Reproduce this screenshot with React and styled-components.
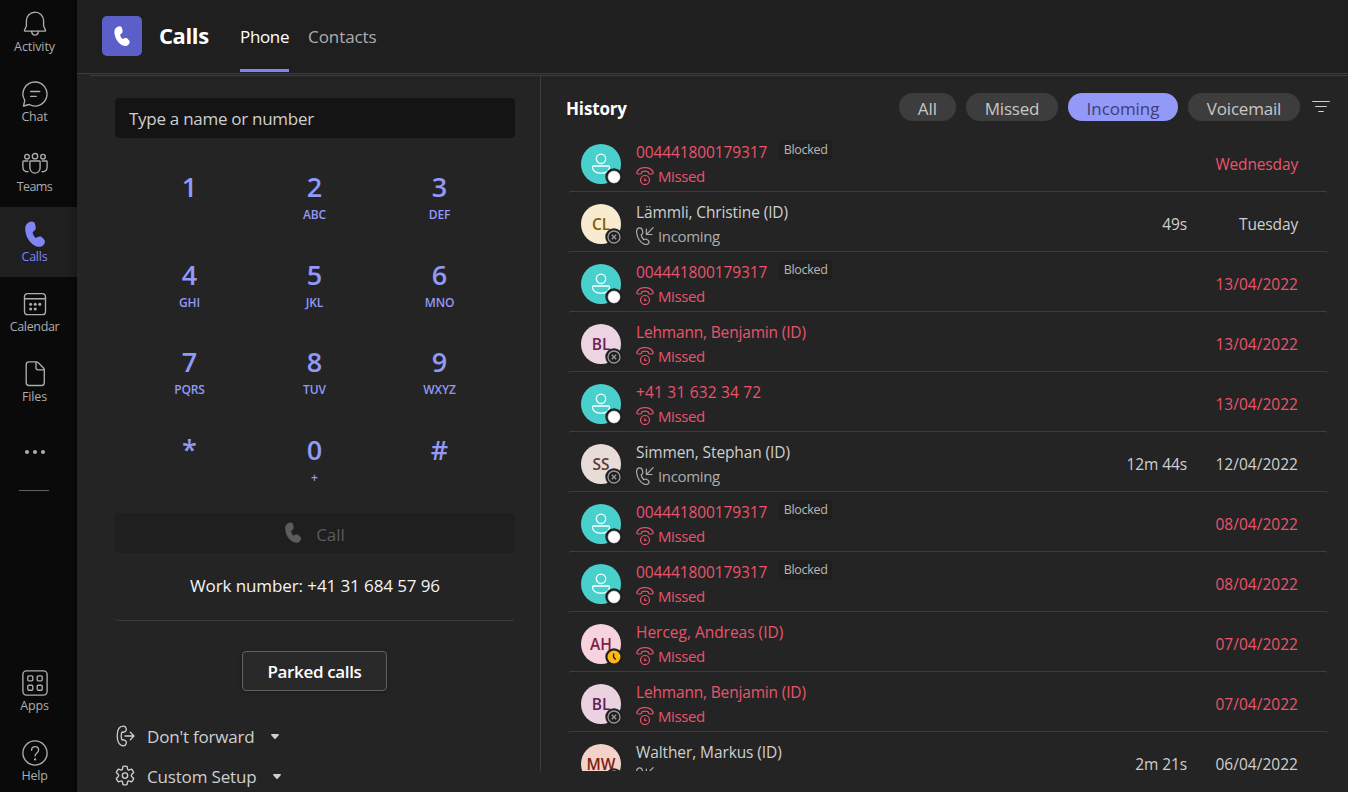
import React from "react";
import styled, { createGlobalStyle } from "styled-components";

const Global = createGlobalStyle`
  * { box-sizing: border-box; }
  body {
    margin: 0;
    background: #242424;
    font-family: "Open Sans", "Noto Sans", sans-serif;
    overflow: hidden;
  }
  button { font: inherit; color: inherit; border: 0; background: none; padding: 0; margin: 0; }
  svg { display: block; flex: none; }
`;

const Shell = styled.div`
  display: flex;
  width: 1348px;
  height: 792px;
  overflow: hidden;
  background: #242424;
`;

/* Text run with optional tracking */
const Label = styled.span`
  letter-spacing: ${(p) => p.$track || 0}px;
  white-space: nowrap;
`;

/* ---------- App rail ---------- */
const Rail = styled.nav`
  display: flex;
  flex-direction: column;
  flex: none;
  width: 77px;
  height: 799px;
  margin-top: -3px;
  background: #0a0a0a;
  box-shadow: inset -8px 0 8px -6px rgba(0, 0, 0, 0.4);
`;

const RailItem = styled.button`
  display: flex;
  flex-direction: column;
  align-items: center;
  flex: none;
  height: 70px;
  padding: 14px 8px 0 0;
  color: ${(p) => (p.$active ? "#7f85f5" : "#adadad")};
  background: ${(p) => (p.$active ? "linear-gradient(90deg, #1f1f1f 66px, #191919 77px)" : "transparent")};
  font-size: 12.5px;
  line-height: 18px;
  svg { margin-bottom: 1px; }
`;

const RailDots = styled.div`
  display: flex;
  justify-content: center;
  gap: 4px;
  padding: 33px 7px 0 0;
  height: 73px;
  i { width: 4px; height: 4px; border-radius: 50%; background: #adadad; }
`;

const RailRule = styled.div`
  width: 30px;
  height: 1px;
  margin-left: 19px;
  background: #616161;
`;

const RailSpacer = styled.div`
  flex: 1;
`;

/* ---------- Header ---------- */
const Main = styled.main`
  display: flex;
  flex-direction: column;
  flex: 1;
  min-width: 0;
`;

const Header = styled.header`
  display: flex;
  align-items: center;
  height: 74px;
  flex: none;
  padding-left: 25px;
  background: #1f1f1f;
  border-bottom: 1px solid #3d3d3d;
`;

const AppTile = styled.div`
  display: flex;
  align-items: center;
  justify-content: center;
  width: 40px;
  height: 40px;
  margin-bottom: 1px;
  border-radius: 5px;
  background: #5b5fc7;
  color: #fff;
`;

const Title = styled.h1`
  width: 50px;
  margin: 0 31px 4px 17px;
  font-size: 22px;
  line-height: 30px;
  font-weight: 700;
  color: #fff;
`;

const Tab = styled.button`
  display: flex;
  align-items: center;
  height: 73px;
  margin-right: 19px;
  padding-bottom: 1px;
  font-size: 17px;
  color: ${(p) => (p.$active ? "#fff" : "#adadad")};
  background: ${(p) => (p.$active ? "linear-gradient(#7f85f5, #7f85f5) 0 69px / 100% 3px no-repeat" : "none")};
`;

const Body = styled.div`
  display: flex;
  flex: 1;
  min-height: 0;
  margin: 1px 0 0 13px;
  border-top: 1px solid #3d3d3d;
`;

/* ---------- Dial pad ---------- */
const Dialer = styled.section`
  width: 450px;
  flex: none;
  padding: 22px 25px 0;
`;

const Search = styled.div`
  height: 40px;
  padding: 0 14px;
  border-radius: 4px;
  background: #141414;
  color: #cfcfcf;
  font-size: 17px;
  line-height: 41px;
`;

const Keys = styled.div`
  display: grid;
  grid-template-columns: repeat(3, 125px);
  grid-auto-rows: 87.6px;
  justify-content: center;
  margin-top: 31px;
  margin-right: 1px;
`;

const Key = styled.button`
  display: flex;
  flex-direction: column;
  align-items: center;
  color: #9299f7;
  b { font-size: 27px; line-height: 36px; font-weight: 600; }
  span { font-size: 12px; line-height: 20px; font-weight: 600; letter-spacing: -0.1px; }
`;

const CallButton = styled.button`
  display: flex;
  align-items: center;
  justify-content: center;
  gap: 15px;
  width: 400px;
  height: 40px;
  margin-top: -6px;
  border-radius: 4px;
  background: #1f1f1f;
  color: #5c5c5c;
  font-size: 17px;
  svg { margin-bottom: 1px; }
  span { padding-top: 2px; }
`;

const WorkNumber = styled.div`
  height: 68px;
  border-bottom: 1px solid #3d3d3d;
  border-radius: 4px;
  padding-top: 20px;
  text-align: center;
  font-size: 17px;
  line-height: 25px;
  color: #f5f5f5;
`;

const Parked = styled.button`
  display: block;
  width: 145px;
  height: 40px;
  margin: 30px 0 25px 127px;
  border: 1px solid #616161;
  border-radius: 4px;
  background: #292929;
  box-shadow: 0 1px 4px rgba(0, 0, 0, 0.3);
  color: #fff;
  font-size: 17px;
  font-weight: 600;
`;

const Setting = styled.div`
  display: flex;
  align-items: center;
  height: 40px;
  color: #cfcfcf;
  font-size: 17px;
  > span { margin: 0 17px 0 12px; padding-top: 1px; }
`;

/* ---------- History ---------- */
const History = styled.section`
  flex: 1;
  height: 695px;
  overflow: hidden;
  border-left: 1px solid #3d3d3d;
`;

const HistoryBar = styled.div`
  display: flex;
  align-items: center;
  height: 55px;
  padding: 7px 18px 0 25px;
`;

const HistoryTitle = styled.h2`
  flex: 1;
  margin: 4px 0 0;
  font-size: 17px;
  line-height: 24px;
  font-weight: 700;
  letter-spacing: -0.15px;
  color: #fff;
`;

const Pill = styled.button`
  width: ${(p) => p.$w}px;
  height: 28px;
  margin-right: 10px;
  padding-top: 3px;
  border-radius: 14px;
  line-height: 25px;
  font-size: 17px;
  text-align: center;
  background: ${(p) => (p.$active ? "#9299f7" : "#3d3d3d")};
  color: ${(p) => (p.$active ? "#3d3e78" : "#c8c8c8")};
`;

const FilterSlot = styled.div`
  margin: 0 0 1px 2px;
  color: #d0d0d0;
`;

const Row = styled.article`
  display: flex;
  align-items: center;
  width: 760px;
  height: 60px;
  margin-left: 27px;
  padding: 5px 30px 0 13px;
  border-top: 1px solid ${(p) => (p.$first ? "transparent" : "#3d3d3d")};
  border-radius: 3px;
  font-size: 15.5px;
  color: #cfcfcf;
`;

const Avatar = styled.div`
  position: relative;
  display: flex;
  align-items: center;
  justify-content: center;
  flex: none;
  width: 40px;
  height: 40px;
  border-radius: 50%;
  background: ${(p) => p.$bg};
  color: ${(p) => p.$fg};
  font-size: 15.5px;
  font-weight: 600;
`;

const Presence = styled.div`
  position: absolute;
  right: -2px;
  bottom: -2px;
  width: 18px;
  height: 18px;
`;

const Who = styled.div`
  display: flex;
  flex-direction: column;
  flex: 1;
  margin-left: 15px;
`;

const NameLine = styled.div`
  display: flex;
  align-items: center;
  height: 24px;
  color: ${(p) => (p.$missed ? "#e9546c" : "#cfcfcf")};
`;

const Blocked = styled.span`
  height: 20px;
  width: 53px;
  margin: -5px 0 0 12px;
  border-radius: 4px;
  background: #1f1f1f;
  color: #b8b8b8;
  font-size: 12.5px;
  line-height: 20px;
  letter-spacing: -0.3px;
  text-align: center;
`;

const StatusLine = styled.div`
  display: flex;
  align-items: center;
  gap: 4px;
  height: 24px;
  font-size: 15px;
  color: ${(p) => (p.$missed ? "#e9546c" : "#adadad")};
`;

const Duration = styled.div`
  text-align: right;
  margin-bottom: 1px;
  letter-spacing: -0.1px;
`;

const When = styled.div`
  width: 111px;
  margin-bottom: 1px;
  text-align: right;
  color: ${(p) => (p.$missed ? "#e9546c" : "#cfcfcf")};
`;

/* ---------- Icons ---------- */
const Stroke = ({ w, h, vb, sw = 1.35, children }) => (
  <svg width={w} height={h} viewBox={vb || `0 0 ${w} ${h}`} fill="none" stroke="currentColor" strokeWidth={sw} strokeLinecap="round" strokeLinejoin="round">
    {children}
  </svg>
);

const Handset = ({ w, h }) => (
  <svg width={w} height={h} viewBox="0 0 58 75" fill="currentColor">
    <path d="M13 3C19-1 27 1 29 8L31 17C32 23 29 27 24 30C20 33 24 42 31 49C36 46 43 43 48 46L55 53C60 59 58 65 53 70C48 75 40 76 32 73C17 67 5 50 2 34C-1 20 0 8 13 3Z" />
  </svg>
);

const BellIcon = () => (
  <Stroke w={26} h={26}>
    <path d="M13 1.2c-5 0-8.6 3.700-8.6 8.600v5.200l-1.900 4.300c-.2.500.1.900.600.900h19.800c.500 0 .8-.4.600-.9l-1.900-4.300V9.800C21.600 4.900 18 1.200 13 1.200Z" />
    <path d="M9.600 20.400c.3 2.300 1.500 3.700 3.400 3.700s3.100-1.400 3.400-3.700" />
  </Stroke>
);
const ChatIcon = () => (
  <Stroke w={26} h={26}>
    <path d="M13 1a12 12 0 1 1-5.800 22.500L1.500 25l1.300-5.600A12 12 0 0 1 13 1Z" />
    <path d="M8.700 10.500h9M8.700 15.400h5.500" />
  </Stroke>
);
const TeamsIcon = () => (
  <Stroke w={26} h={26}>
    <circle cx="13" cy="5.200" r="2.700" />
    <circle cx="5" cy="5.700" r="2.300" />
    <circle cx="21" cy="5.700" r="2.300" />
    <path d="M8.600 10h8.800c.4 0 .7.300.7.700V17a5.100 5.100 0 0 1-10.200 0v-6.300c0-.4.300-.7.700-.7Z" />
    <path d="M5.800 10H1.600c-.4 0-.7.300-.7.700v5.600c0 3 2.300 4.900 5.100 4.400M20.200 10h4.200c.4 0 .7.300.7.700v5.600c0 3-2.300 4.900-5.100 4.400" />
  </Stroke>
);
const CalendarIcon = () => (
  <Stroke w={26} h={26}>
    <rect x="2.500" y="2.600" width="21" height="21" rx="3.200" />
    <path d="M2.500 7.700h21" />
    <g fill="currentColor" stroke="none">
      <circle cx="8.600" cy="13.300" r="1.500" /><circle cx="13.200" cy="13.300" r="1.500" /><circle cx="17.800" cy="13.300" r="1.500" />
      <circle cx="8.600" cy="17.900" r="1.500" /><circle cx="13.200" cy="17.900" r="1.500" />
    </g>
  </Stroke>
);
const FileIcon = () => (
  <Stroke w={26} h={26}>
    <path d="M7 .9h7.300c.8 0 1.400.3 2 .800l5.200 5.300c.6.600.8 1.200.8 2v12.700a2.800 2.800 0 0 1-2.800 2.800H7a2.800 2.800 0 0 1-2.800-2.800V3.700A2.800 2.800 0 0 1 7 .9Z" />
    <path d="M14 1.200v5.600c0 1.300.7 2 2 2h5.800" />
  </Stroke>
);
const AppsIcon = () => (
  <Stroke w={26} h={26}>
    <rect x=".9" y=".9" width="24.200" height="24.200" rx="3.500" />
    {[[5.800, 5.800], [15.200, 5.800], [5.800, 15.200], [15.200, 15.200]].map(([x, y]) => (
      <rect key={x + "-" + y} x={x} y={y} width="5" height="5" rx="1" />
    ))}
  </Stroke>
);
const HelpIcon = () => (
  <Stroke w={26} h={26}>
    <circle cx="13" cy="13" r="12.100" />
    <path d="M9.600 10.200c0-2.300 1.400-3.600 3.500-3.600 2 0 3.500 1.300 3.500 3.300 0 2.900-3.500 3.100-3.500 6" />
    <circle cx="13.100" cy="19.300" r=".5" fill="currentColor" />
  </Stroke>
);
const FilterIcon = () => (
  <Stroke w={18} h={14} sw={1.2}>
    <path d="M.7 1.500h16.600M3.700 6.500h10.600M6.700 11.500h4.600" />
  </Stroke>
);
const ForwardIcon = () => (
  <Stroke w={20} h={22} sw={1.3}>
    <path d="M8.300 1.200C4.300 1.200 2.200 5.400 2.200 11s2.100 9.800 6.100 9.800c1.400 0 2.400-.7 2.700-2l.3-1.200c.2-.9-.2-1.600-1-2l-1.500-.7c-.6-.3-1.100-.2-1.600.2-.7-.9-1-2.500-1-4.100s.3-3.200 1-4.100c.5.400 1 .5 1.600.2l1.500-.7c.8-.4 1.200-1.100 1-2L11 3.200c-.3-1.300-1.300-2-2.700-2Z" />
    <path d="M10 11h8.700M15.300 7.300 19 11l-3.700 3.700" />
  </Stroke>
);
const GearIcon = () => (
  <Stroke w={20} h={22} sw={1.35}>
    <path d="M8 1.400c1.300-.3 2.700-.3 4 0l.5 2.400c.2.900 1 1.400 1.900 1.100l2.300-.7c.9 1 1.600 2.100 2 3.400l-1.800 1.700c-.7.700-.7 1.700 0 2.400l1.800 1.700c-.4 1.300-1.100 2.400-2 3.400l-2.300-.7c-.9-.3-1.700.2-1.900 1.100l-.5 2.400c-1.300.3-2.700.3-4 0l-.5-2.400c-.2-.9-1-1.400-1.900-1.100l-2.300.7c-.9-1-1.600-2.100-2-3.400L3.100 11.700c.7-.7.7-1.700 0-2.400L1.300 7.600c.4-1.300 1.100-2.400 2-3.400l2.300.7c.9.3 1.700-.2 1.900-1.100L8 1.400Z" />
    <circle cx="10" cy="10.600" r="2.700" />
  </Stroke>
);
const Caret = () => (
  <svg width="8" height="5" viewBox="0 0 8 5" fill="currentColor">
    <path d="M.8 0h6.400c.7 0 1 .8.500 1.300L4.600 4.700a.8.800 0 0 1-1.200 0L.3 1.300C-.2.800.1 0 .8 0Z" />
  </svg>
);
const MissedIcon = () => (
  <Stroke w={18} h={18} sw={1.2}>
    <path d="M.9 5.300C2.100 2 5 .6 9 .6s6.900 1.400 8.100 4.700c.3 1-.2 1.700-1.200 1.700h-2.200c-.9 0-1.300-.5-1.400-1.300l-.1-1C10.200 3.900 7.800 3.900 5.800 4.700l-.1 1C5.600 6.500 5.200 7 4.300 7H2.100C1.100 7 .6 6.300.9 5.300Z" />
    <circle cx="9" cy="13" r="4.500" />
    <path d="M8.800 11.500v2h1.400" />
  </Stroke>
);
const IncomingIcon = () => (
  <Stroke w={18} h={18} sw={1.2}>
    <path d="M2.900.9C.9 1.500.3 3.300.7 6c.7 4.600 3.500 9.100 7.200 11 1.800.9 3.600.7 4.800-.9.600-.8.500-1.600-.2-2.300l-1.300-1.200c-.6-.6-1.300-.7-2.100-.4l-1.200.5C6.500 11.500 5.500 9.700 5.200 7.800l1-.9c.6-.5.800-1.200.6-2L6.200 2.700C5.700 1.200 4.500.5 2.900.9Z" />
    <path d="M17.100.7l-6.500 6.600M10.400 2v5.500h5.700" />
  </Stroke>
);
const PersonIcon = () => (
  <Stroke w={20} h={22} sw={1.3}>
    <circle cx="10" cy="5.800" r="4.700" />
    <path d="M2.600 13h14.800c.7 0 1.200.5 1.100 1.200-.4 3.500-3.600 6-8.500 6s-8.100-2.500-8.500-6c-.1-.7.4-1.200 1.100-1.200Z" />
  </Stroke>
);

const PresenceMark = ({ kind }) => (
  <Presence>
    <svg width="18" height="18" viewBox="0 0 18 18" fill="none">
      <circle cx="9" cy="9" r="8.700" fill="#1f1f1f" />
      {kind === "unknown" && <circle cx="9" cy="9" r="6" fill="#fff" stroke="#dfe3ee" strokeWidth=".6" />}
      {kind === "offline" && (
        <g stroke="#979797" strokeWidth="1.300">
          <circle cx="9" cy="9" r="6" />
          <path d="M6.800 6.800l4.400 4.400M11.200 6.800l-4.400 4.400" />
        </g>
      )}
      {kind === "away" && (
        <g>
          <circle cx="9" cy="9" r="6.500" fill="#fdb913" />
          <path d="M8.600 5.600v3.600l2.200 2.200" stroke="#1f1f1f" strokeWidth="1.400" />
        </g>
      )}
    </svg>
  </Presence>
);

/* ---------- Data ---------- */
const nav = [
  { label: "Activity", icon: <BellIcon />, track: -0.1 },
  { label: "Chat", icon: <ChatIcon />, track: -0.2 },
  { label: "Teams", icon: <TeamsIcon />, track: -0.6 },
  { label: "Calls", icon: <Handset w={20} h={26} />, active: true, track: -0.2 },
  { label: "Calendar", icon: <CalendarIcon />, track: -0.35 },
  { label: "Files", icon: <FileIcon />, track: -0.1 },
];

const keys = [
  ["1", ""], ["2", "ABC"], ["3", "DEF"],
  ["4", "GHI"], ["5", "JKL"], ["6", "MNO"],
  ["7", "PQRS"], ["8", "TUV"], ["9", "WXYZ"],
  ["*", ""], ["0", "+"], ["#", ""],
];

const pills = [
  { label: "All", w: 57 },
  { label: "Missed", w: 92, track: -0.2 },
  { label: "Incoming", w: 110, track: -0.05, active: true },
  { label: "Voicemail", w: 112, track: -0.2 },
];

const guest = { bg: "#48d1cc", fg: "#fff", presence: "unknown", track: -0.12 };
const calls = [
  { ...guest, name: "004441800179317", blocked: true, missed: true, when: "Wednesday" },
  { name: "Lämmli, Christine (ID)", track: -0.12, initials: "CL", bg: "#f8ebcf", fg: "#835b00", presence: "offline", duration: "49s", when: "Tuesday" },
  { ...guest, name: "004441800179317", blocked: true, missed: true, when: "13/04/2022" },
  { name: "Lehmann, Benjamin (ID)", track: -0.17, initials: "BL", bg: "#ecd4e3", fg: "#6b2150", presence: "offline", missed: true, when: "13/04/2022" },
  { ...guest, name: "+41 31 632 34 72", track: 0.18, missed: true, when: "13/04/2022" },
  { name: "Simmen, Stephan (ID)", track: -0.1, initials: "SS", bg: "#e8dcd8", fg: "#5a3a34", presence: "offline", duration: "12m 44s", when: "12/04/2022" },
  { ...guest, name: "004441800179317", blocked: true, missed: true, when: "08/04/2022" },
  { ...guest, name: "004441800179317", blocked: true, missed: true, when: "08/04/2022" },
  { name: "Herceg, Andreas (ID)", track: -0.02, initials: "AH", bg: "#f6d3de", fg: "#7d1f42", presence: "away", missed: true, when: "07/04/2022" },
  { name: "Lehmann, Benjamin (ID)", track: -0.17, initials: "BL", bg: "#ead2e1", fg: "#5f2152", presence: "offline", missed: true, when: "07/04/2022" },
  { name: "Walther, Markus (ID)", track: -0.1, initials: "MW", bg: "#f3d3c9", fg: "#7a2413", presence: "offline", duration: "2m 21s", when: "06/04/2022" },
];

const NavButton = ({ item }) => (
  <RailItem $active={item.active}>
    {item.icon}
    <Label $track={item.track}>{item.label}</Label>
  </RailItem>
);

const CallRow = ({ call, first }) => (
  <Row $first={first}>
    <Avatar $bg={call.bg} $fg={call.fg}>
      {call.initials || <PersonIcon />}
      <PresenceMark kind={call.presence} />
    </Avatar>
    <Who>
      <NameLine $missed={call.missed}>
        <Label $track={call.track}>{call.name}</Label>
        {call.blocked && <Blocked>Blocked</Blocked>}
      </NameLine>
      <StatusLine $missed={call.missed}>
        {call.missed ? <MissedIcon /> : <IncomingIcon />}
        <Label $track={call.missed ? -0.42 : -0.35}>{call.missed ? "Missed" : "Incoming"}</Label>
      </StatusLine>
    </Who>
    {call.duration && <Duration>{call.duration}</Duration>}
    <When $missed={call.missed}>
      <Label $track={call.when.includes("/") ? 0.03 : -0.15}>{call.when}</Label>
    </When>
  </Row>
);

export default function App() {
  return (
    <Shell>
      <Global />
      <Rail>
        {nav.map((item) => <NavButton key={item.label} item={item} />)}
        <RailDots><i /><i /><i /></RailDots>
        <RailRule />
        <RailSpacer />
        <NavButton item={{ label: "Apps", icon: <AppsIcon />, track: -0.2 }} />
        <NavButton item={{ label: "Help", icon: <HelpIcon />, track: -0.2 }} />
      </Rail>
      <Main>
        <Header>
          <AppTile><Handset w={16} h={20} /></AppTile>
          <Title><Label $track={-0.4}>Calls</Label></Title>
          <Tab $active><Label $track={-0.35}>Phone</Label></Tab>
          <Tab><Label $track={-0.1}>Contacts</Label></Tab>
        </Header>
        <Body>
          <Dialer>
            <Search><Label $track={-0.28}>Type a name or number</Label></Search>
            <Keys>
              {keys.map(([digit, letters]) => (
                <Key key={digit}><b>{digit}</b><span>{letters}</span></Key>
              ))}
            </Keys>
            <CallButton><Handset w={16} h={21} /><span>Call</span></CallButton>
            <WorkNumber><Label $track={-0.1}>Work number: +41 31 684 57 96</Label></WorkNumber>
            <Parked><Label $track={-0.35}>Parked calls</Label></Parked>
            <Setting><ForwardIcon /><Label $track={-0.2}>Don't forward</Label><Caret /></Setting>
            <Setting><GearIcon /><Label $track={-0.17}>Custom Setup</Label><Caret /></Setting>
          </Dialer>
          <History>
            <HistoryBar>
              <HistoryTitle>History</HistoryTitle>
              {pills.map((p) => (
                <Pill key={p.label} $w={p.w} $active={p.active}><Label $track={p.track}>{p.label}</Label></Pill>
              ))}
              <FilterSlot><FilterIcon /></FilterSlot>
            </HistoryBar>
            {calls.map((c, i) => <CallRow key={i} call={c} first={i === 0} />)}
          </History>
        </Body>
      </Main>
    </Shell>
  );
}
